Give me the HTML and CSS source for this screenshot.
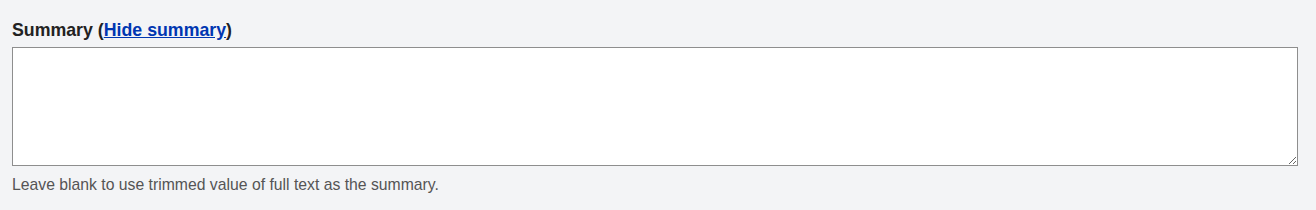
FILE: index.html
```html
<!DOCTYPE html>
<html lang="en">

<head>
    <meta charset="UTF-8">
    <meta name="viewport" content="width=device-width, initial-scale=1.0">
    <title>Summary</title>
    <link rel="stylesheet" href="styles.css">
</head>

<body>
    <div class="form-item">
        <label class="form-label" for="edit-summary">Summary (<a href="#" class="toggle-link">Hide summary</a>)</label>
        <textarea id="edit-summary" class="form-textarea" rows="5"></textarea>
        <div class="description">Leave blank to use trimmed value of full text as the summary.</div>
    </div>
</body>

</html>
```

FILE: styles.css
```css
body {
    margin: 0;
    padding: 18px 18px 0 12px;
    background-color: #f3f4f6;
    font-family: "Liberation Sans", Arial, sans-serif;
    color: #222;
}

.form-item {
    display: flex;
    flex-direction: column;
}

.form-label {
    font-size: 17.75px;
    font-weight: bold;
    line-height: 24px;
    margin-bottom: 5px;
    color: #222;
}

.toggle-link {
    color: #0036b1;
}

.form-textarea {
    box-sizing: border-box;
    width: 1286px;
    height: 119px;
    margin: 0;
    border: 1px solid #8e8e8e;
    background: #fff;
    font-family: inherit;
    font-size: 16px;
    padding: 4px;
}

.description {
    font-size: 15.75px;
    line-height: 18px;
    margin-top: 10px;
    color: #555;
}
```
